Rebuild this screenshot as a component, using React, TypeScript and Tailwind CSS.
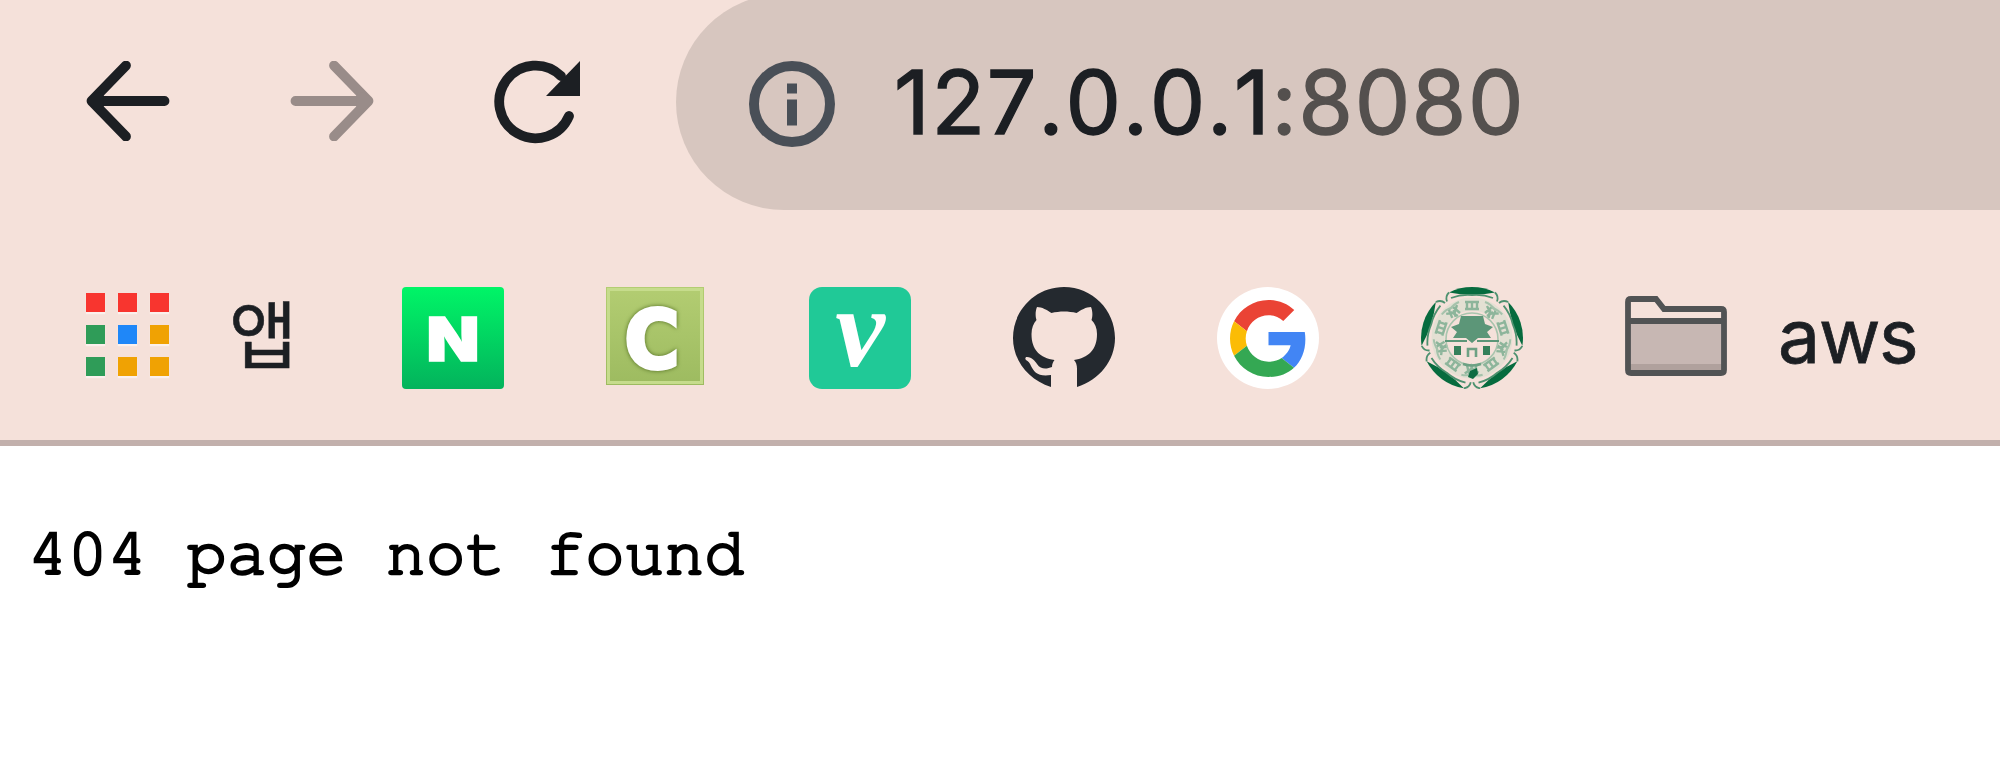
const appColors = [
  "bg-[#f8352f]",
  "bg-[#f8352f]",
  "bg-[#f8352f]",
  "bg-[#2f9c58]",
  "bg-[#1f87f8]",
  "bg-[#f0a203]",
  "bg-[#2f9c58]",
  "bg-[#f0a203]",
  "bg-[#f0a203]",
]

function BackIcon() {
  return (
    <svg className="h-20 w-[84px]" viewBox="0 0 84 80" fill="none" stroke="currentColor" strokeWidth="9.8" strokeLinecap="round" strokeLinejoin="round">
      <path d="M78.5 40H6M40 4.5 5.5 40 40 75.5" />
      <path d="m7 40 6-4v8z" fill="currentColor" />
    </svg>
  )
}

function ReloadIcon() {
  return (
    <svg className="h-[84px] w-[88px]" viewBox="0 0 88 84" fill="none">
      <path d="M75 56A36.3 36.3 0 1 1 67 16" stroke="currentColor" strokeWidth="9.8" strokeLinecap="round" />
      <path d="M86 1v35H52z" fill="currentColor" />
    </svg>
  )
}

function InfoIcon() {
  return (
    <svg className="size-[86px] text-[#494f57]" viewBox="0 0 86 86" fill="none">
      <circle cx="43" cy="43" r="38" stroke="currentColor" strokeWidth="10" />
      <path d="M38 22.5h10v10H38zM38 38.5h10v26H38z" fill="currentColor" />
    </svg>
  )
}

function GithubIcon() {
  return (
    <svg className="size-[102px]" viewBox="0 0 102 102">
      <path
        d="M51 0C22.8 0 0 22.8 0 51c0 22.5 15.5 42 38 49V88c-13 2-17-3-20-9-1-3-3-5-5-6-1-1-1-3 1-3 5 0 8 4 10 7 4 6 10 5 15 3 0-3 1-5 2.5-7C27 71 18.5 63 18.5 47c0-6 2-10.5 5-14-1-3-1.5-8 .5-13 5 0 10 3 14.5 6 8-2 17-2 25 0C68 23 73 20 78 20c2 5 1.5 10 .5 13 3.5 3.5 5.5 8 5.5 14 0 16-9 24-23 26 2 2 3 5 3 9v18c22.5-7 38-26.5 38-49C102 22.8 79.2 0 51 0z"
        fill="#24292f"
      />
    </svg>
  )
}

function GoogleIcon() {
  return (
    <svg className="size-[77px]" viewBox="0 0 48 48">
      <path fill="#ea4335" d="M24 9.5c3.54 0 6.71 1.22 9.21 3.6l6.85-6.85C35.9 2.38 30.47 0 24 0 14.62 0 6.51 5.38 2.56 13.22l7.98 6.19C12.43 13.72 17.74 9.5 24 9.5z" />
      <path fill="#4285f4" d="M46.98 24.55c0-1.57-.15-3.09-.38-4.55H24v8.2h13.8c-.58 2.96-3.1 6.3-5.64 8l7.73 6c4.51-4.18 7.09-10.36 7.09-17.65z" />
      <path fill="#fbbc05" d="M10.53 28.59c-.48-1.45-.76-2.99-.76-4.59s.27-3.14.76-4.59l-7.98-6.19C.92 16.46 0 20.12 0 24c0 3.88.92 7.54 2.56 10.78l7.97-6.19z" />
      <path fill="#34a853" d="M24 48c6.48 0 11.93-2.13 15.89-5.81l-7.73-6c-2.15 1.45-4.92 2.3-8.16 2.3-6.26 0-11.57-4.22-13.47-9.91l-7.98 6.19C6.51 42.62 14.62 48 24 48z" />
    </svg>
  )
}

// One of the five petals around the rim
function CrestPetal({ angle }: { angle: number }) {
  return (
    <g transform={`rotate(${angle} 51 51)`}>
      <path d="M28 5.5A51 51 0 0 1 74 5.5Q51 10 28 5.5Z" fill="#066b3e" />
      <path d="M28 5.5q-4 4-2 9M74 5.5q4 4 2 9M30 11q10-4 21-3 11-1 21 3" stroke="#4d916f" strokeWidth="1.8" />
      <path d="M46 14v9M51 14v9M56 14v9M44 15h14M44 22h14M32 20l7 6M30 25l7 4M36 18l-3 9M64 26l7-6M66 29l6-4M66 19l4 8" stroke="#8db59b" strokeWidth="2.4" />
      <path d="M28 23q5-6 10-8M64 15q6 2 10 8" stroke="#a5c2ab" strokeWidth="2" />
    </g>
  )
}

function CrestIcon() {
  return (
    <svg className="size-[102px]" viewBox="0 0 102 102" fill="none">
      <circle cx="51" cy="51" r="34" stroke="#e3e0d3" strokeWidth="13" />
      {[0, 72, 144, 216, 288].map((angle) => (
        <CrestPetal key={angle} angle={angle} />
      ))}
      <circle cx="51" cy="52" r="26" stroke="#a9c5ae" strokeWidth="1.6" />
      <path d="M40 29h22l2 8 8 3-6 5 4 6H57l-6 5-6-5H32l4-6-6-5 8-3z" fill="#5c9678" />
      <path d="M24 54h22M56 54h22" stroke="#5c9678" strokeWidth="1.8" />
      <path d="M33 59h7v9h-7zM62 59h7v9h-7z" fill="#35805a" />
      <path d="M47 70v-8h8v8M42 77q9 3 18 0" stroke="#6ea184" strokeWidth="2.6" />
      <path d="m47 90 2-6 7-3 1 6-5 5z" fill="#0d6c42" />
    </svg>
  )
}

function FolderIcon() {
  return (
    <svg className="h-20 w-[102px]" viewBox="0 0 102 80" fill="none">
      <path d="M5 26h92v50H5z" fill="#c7b7b3" />
      <path d="M5 68h92v8H5z" fill="#b0a19d" />
      <path d="M3 25h96M3 6q0-3 3-3h25l8 10h57q3 0 3 3v58q0 3-3 3H6q-3 0-3-3z" stroke="#515354" strokeWidth="5.8" />
    </svg>
  )
}

function Toolbar() {
  return (
    <div className="flex h-[210px] items-start">
      <div className="flex h-[202px] w-[676px] items-center pl-[86px]">
        <BackIcon />
        <div className="ml-[120px] rotate-180 text-[#998c89]">
          <BackIcon />
        </div>
        <div className="ml-[120px] pt-0.5">
          <ReloadIcon />
        </div>
      </div>
      <div className="-mt-1.5 flex h-[216px] flex-1 items-center rounded-l-full bg-[#d7c6bf] pl-[73px]">
        <div className="pt-1">
          <InfoIcon />
        </div>
        <div className="ml-[59px] whitespace-nowrap text-[88px] leading-none tracking-[1.7px] text-[#1c1f23] [font-kerning:none] [-webkit-text-stroke:1.4px_currentColor]">
          127.0.0.1<span className="text-[#54504e]">:8080</span>
        </div>
      </div>
    </div>
  )
}

function BookmarksBar() {
  return (
    <div className="flex h-[230px] items-start pt-[77px] pl-[86px]">
      <div className="mt-1.5 grid grid-cols-3 gap-x-[13px] gap-y-[13px]">
        {appColors.map((color, i) => (
          <div key={i} className={`size-[19px] shadow-[0_2px_1px_#fbf0ec] ${color}`} />
        ))}
      </div>
      <div className="ml-[60px] w-[173px] text-[74px] leading-[98px] [-webkit-text-stroke:0.6px_#1c1f23]">앱</div>
      <svg className="size-[102px] overflow-visible" viewBox="0 0 102 102">
        <defs>
          <linearGradient id="green" x2="0" y2="1">
            <stop stopColor="#00f567" />
            <stop offset="1" stopColor="#03b35c" />
          </linearGradient>
        </defs>
        <rect width="102" height="102" rx="4" fill="url(#green)" />
        <text x="24.5" y="73.5" textLength="53" lengthAdjust="spacingAndGlyphs" fill="#fff" stroke="#fff" strokeWidth="1.5" className="text-[60px] font-black">N</text>
      </svg>
      <svg className="ml-[102px] size-[98px] overflow-visible" viewBox="0 0 98 98">
        <defs>
          <linearGradient id="olive" x2="0" y2="1">
            <stop stopColor="#b3cd72" />
            <stop offset="1" stopColor="#9dbb60" />
          </linearGradient>
        </defs>
        <rect width="98" height="98" fill="url(#olive)" />
        <path d="M2.5 2.5h93v93h-93z" fill="none" stroke="#c6dc8c" strokeWidth="3" />
        <text
          x="18.5"
          y="81"
          textLength="55"
          lengthAdjust="spacingAndGlyphs"
          fill="#fff"
          stroke="#fff"
          strokeWidth="4"
          className="font-['DejaVu_Sans'] text-[80px] font-bold drop-shadow-[0_0_2px_#4f6b20]"
        >
          C
        </text>
      </svg>
      <div className="ml-[105px] flex size-[102px] justify-center rounded-[13px] bg-[#20c997] font-['Liberation_Serif'] text-[112px] leading-[82px] font-bold text-white italic">
        v
      </div>
      <div className="ml-[102px]">
        <GithubIcon />
      </div>
      <div className="ml-[102px] flex size-[102px] items-center justify-center rounded-full bg-white">
        <GoogleIcon />
      </div>
      <div className="ml-[102px]">
        <CrestIcon />
      </div>
      <div className="mt-[9px] ml-[102px]">
        <FolderIcon />
      </div>
      <div className="ml-[51px] text-[75px] leading-[98px] tracking-[-1.2px] [-webkit-text-stroke:0.8px_#1c1f23]">aws</div>
    </div>
  )
}

export default function App() {
  return (
    <div className="h-[758px] w-[2000px] overflow-hidden bg-white font-['Inter','Noto_Sans_CJK_KR',sans-serif]">
      <div className="border-b-[6px] border-[#c2b0ac] bg-[#f5e1da] text-[#1c1f23]">
        <Toolbar />
        <BookmarksBar />
      </div>
      <pre className="px-[28px] pt-[71px] font-['FreeMono','Courier_New','Liberation_Mono',monospace] text-[66.3px] leading-[74px] text-black [-webkit-text-stroke:2.6px_#000]">404 page not found</pre>
    </div>
  )
}
